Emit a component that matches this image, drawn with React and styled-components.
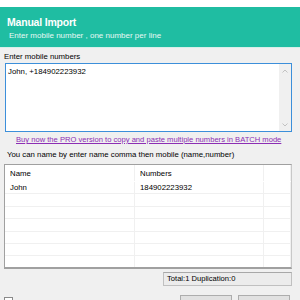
import React from "react";
import styled, { createGlobalStyle } from "styled-components";

const Global = createGlobalStyle`
  html, body { margin: 0; padding: 0; }
  body {
    background: #f0f0f0;
    font-family: "Liberation Sans", Arial, sans-serif;
    color: #000;
    overflow: hidden;
  }
`;

const Window = styled.div`
  width: 300px;
  height: 300px;
  overflow: hidden;
`;

const TopStrip = styled.div`
  height: 7px;
  background: #fff;
`;

const Header = styled.div`
  height: 41px;
  background: #1fbda2;
  border-bottom: 1px solid #d6efe9;
  padding: 9px 0 0 7px;
  box-sizing: border-box;
  color: #fff;
`;

const Title = styled.div`
  font-size: 10.5px;
  font-weight: bold;
  letter-spacing: -0.2px;
  line-height: 12px;
`;

const Subtitle = styled.div`
  font-size: 8px;
  line-height: 10px;
  margin: 3px 0 0 2px;
  color: #e8f8f4;
`;

const Body = styled.div`
  padding: 4px 8px 0 4px;
  display: flex;
  flex-direction: column;
  & > * { flex-shrink: 0; }
`;

const Label = styled.div`
  font-size: 7.8px;
  line-height: 9px;
  margin: ${(p) => p.$m || "0"};
`;

const InputBox = styled.div`
  margin: 2px 0 0 1px;
  height: 67px;
  border: 1px solid #3c8fda;
  background: #fff;
  display: flex;
`;

const InputText = styled.div`
  flex: 1;
  font-size: 7.8px;
  padding: 3px 2px;
`;

const Scroll = styled.div`
  width: 12px;
  background: #f0f0f0;
  display: flex;
  flex-direction: column;
  justify-content: space-between;
  align-items: center;
  padding: 5px 0 4px;
`;

const Link = styled.a`
  margin: 3px 0 0 12px;
  font-size: 7.6px;
  line-height: 9px;
  color: #8c2eb4;
  text-decoration: underline;
  white-space: nowrap;
`;

const Table = styled.div`
  margin-top: 5px;
  height: 105px;
  border: 1px solid #a0a0a0;
  border-right-color: #c8c8c8;
  border-bottom: 2px solid #a0a0a0;
  background: #fff;
  box-sizing: border-box;
  overflow: hidden;
`;

const Row = styled.div`
  display: grid;
  grid-template-columns: 130px 129px 1fr;
  height: ${(p) => (p.$head ? "17px" : "12.4px")};
  border-bottom: 1px solid ${(p) => (p.$head ? "#fff" : "#f0f0f0")};
  box-sizing: border-box;
  font-size: 7.8px;
`;

const Cell = styled.div`
  display: flex;
  align-items: center;
  padding-left: 5px;
  border-right: 1px solid #f0f0f0;
  white-space: nowrap;
`;

const Status = styled.div`
  margin: 3px 0 0 159px;
  height: 12px;
  border: 1px solid #c0c0c0;
  border-top-color: #a8a8a8;
  background: #ececec;
  font-size: 7.6px;
  line-height: 11px;
  padding-left: 3px;
`;

const Footer = styled.div`
  display: flex;
  align-items: flex-start;
  margin-top: 9px;
`;

const Check = styled.div`
  width: 9px;
  height: 9px;
  margin-top: 2px;
  border: 1px solid #8a8a8a;
  background: #fff;
  box-sizing: border-box;
`;

const Button = styled.div`
  width: 52px;
  height: 14px;
  border: 1px solid #adadad;
  background: #e1e1e1;
  margin-left: ${(p) => p.$ml || "0"};
  box-sizing: border-box;
`;

const Chevron = ({ up }) => (
  <svg width="6" height="4" viewBox="0 0 6 4">
    <path
      d={up ? "M0.5 3.5 L3 1 L5.5 3.5" : "M0.5 0.5 L3 3 L5.5 0.5"}
      fill="none"
      stroke="#c2c2c2"
      strokeWidth="1"
    />
  </svg>
);

const rows = [
  ["John", "184902223932"],
  ["", ""],
  ["", ""],
  ["", ""],
  ["", ""],
  ["", ""],
  ["", ""],
];

export default function App() {
  return (
    <Window>
      <Global />
      <TopStrip />
      <Header>
        <Title>Manual Import</Title>
        <Subtitle>Enter mobile number , one number per line</Subtitle>
      </Header>
      <Body>
        <Label>Enter mobile numbers</Label>
        <InputBox>
          <InputText>John, +184902223932</InputText>
          <Scroll>
            <Chevron up />
            <Chevron />
          </Scroll>
        </InputBox>
        <Link>Buy now the PRO version to copy and paste multiple numbers in BATCH mode</Link>
        <Label $m="6px 0 0 3px">You can name by enter name comma then mobile (name,number)</Label>
        <Table>
          <Row $head>
            <Cell>Name</Cell>
            <Cell>Numbers</Cell>
            <Cell />
          </Row>
          {rows.map((r, i) => (
            <Row key={i}>
              <Cell>{r[0]}</Cell>
              <Cell>{r[1]}</Cell>
              <Cell />
            </Row>
          ))}
        </Table>
        <Status>Total:1 Duplication:0</Status>
        <Footer>
          <Check />
          <Button $ml="167px" />
          <Button $ml="6px" />
        </Footer>
      </Body>
    </Window>
  );
}
